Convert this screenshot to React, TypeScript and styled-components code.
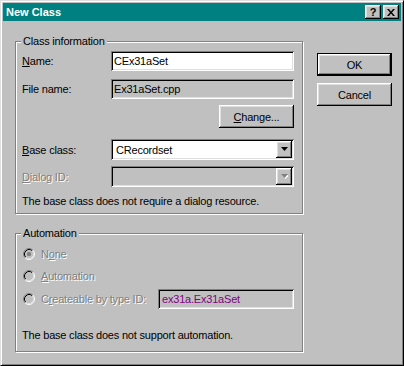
import React from 'react';
import styled, {createGlobalStyle, css} from "styled-components";

const GlobalStyle = createGlobalStyle`
    html, body {
        margin: 0;
        padding: 0;
        background: #c0c0c0;
    }
    body {
        font-family: "Liberation Sans", Arial, sans-serif;
        font-size: 11px;
        letter-spacing: -0.2px;
        color: #000;
    }
`;

const raised = css`
    background: #c0c0c0;
    box-shadow: inset -1px -1px 0 #000, inset 1px 1px 0 #fff, inset -2px -2px 0 #808080, inset 2px 2px 0 #dfdfdf;
`;

const sunken = css`
    box-shadow: inset 1px 1px 0 #808080, inset -1px -1px 0 #fff, inset 2px 2px 0 #000, inset -2px -2px 0 #dfdfdf;
`;

const disabledText = css`
    color: #808080;
    text-shadow: 1px 1px 0 #fff;
`;

const Window = styled.div`
    width: 404px;
    height: 366px;
    box-sizing: border-box;
    border: 1px solid;
    border-color: #dfdfdf #000 #000 #dfdfdf;
    box-shadow: inset 1px 1px 0 #fff, inset -1px -1px 0 #808080;
    padding: 2px;
    background: #c0c0c0;
    display: flex;
    flex-direction: column;
`;

const TitleBar = styled.div`
    height: 18px;
    background: #008080;
    display: flex;
    align-items: center;
    padding: 0 2px 0 3px;
`;

const Title = styled.div`
    flex: 1;
    color: #fff;
    font-weight: 700;
    letter-spacing: 0;
`;

const CaptionButtons = styled.div`
    display: flex;
    gap: 2px;
`;

const CaptionButton = styled.div`
    ${raised};
    width: 16px;
    height: 14px;
    display: flex;
    align-items: center;
    justify-content: center;
    font-weight: 700;
    font-size: 11px;
    line-height: 14px;
`;

const Body = styled.div`
    display: flex;
    gap: 14px;
    padding: 20px 9px 0 12px;
`;

const Main = styled.div`
    width: 288px;
    display: flex;
    flex-direction: column;
    gap: 19px;
`;

const Group = styled.div<{ $bottom: number }>`
    border: 1px solid #808080;
    box-shadow: 1px 1px 0 #fff, inset 1px 1px 0 #fff;
    padding: 0 8px ${p => p.$bottom}px 6px;
    display: flex;
    flex-direction: column;
`;

const Legend = styled.div`
    align-self: flex-start;
    margin: -7px 0 0 -1px;
    padding: 0 2px;
    height: 13px;
    line-height: 13px;
    background: #c0c0c0;
`;

const FieldRow = styled.div<{ $top: number; $h?: number }>`
    display: grid;
    grid-template-columns: 89px 1fr;
    align-items: center;
    margin-top: ${p => p.$top}px;
    height: ${p => p.$h ?? 20}px;
`;

const Label = styled.span<{ $off?: boolean }>`
    ${p => p.$off && disabledText};
`;

const Field = styled.div<{ $white?: boolean; $ink?: string; $pad?: number }>`
    ${sunken};
    height: 100%;
    box-sizing: border-box;
    background: ${p => (p.$white ? '#fff' : '#c0c0c0')};
    color: ${p => p.$ink ?? '#000'};
    padding: 0 2px 0 ${p => p.$pad ?? 3}px;
    display: flex;
    align-items: center;
    justify-content: space-between;
`;

const DropButton = styled.div`
    ${raised};
    width: 16px;
    height: 17px;
    display: flex;
    align-items: center;
    justify-content: center;
`;

const ButtonRow = styled.div<{ $top: number }>`
    display: flex;
    justify-content: flex-end;
    margin-top: ${p => p.$top}px;
`;

const PushButton = styled.div<{ $default?: boolean }>`
    ${raised};
    width: 75px;
    height: 23px;
    box-sizing: border-box;
    display: flex;
    align-items: center;
    justify-content: center;
    ${p => p.$default && css`
        box-shadow: inset 0 0 0 1px #000, inset -2px -2px 0 #000, inset 2px 2px 0 #fff, inset -3px -3px 0 #808080, inset 3px 3px 0 #dfdfdf;
    `};
`;

const Side = styled.div`
    display: flex;
    flex-direction: column;
    gap: 7px;
    padding-top: 12px;
`;

const Note = styled.div<{ $top: number }>`
    margin-top: ${p => p.$top}px;
    height: 13px;
    line-height: 13px;
`;

const RadioRow = styled.div<{ $top: number }>`
    display: flex;
    align-items: center;
    gap: 6px;
    height: 20px;
    margin-top: ${p => p.$top}px;
    padding-left: 1px;
    color: #808080;
`;

const RadioLabel = styled.span`
    ${disabledText};
`;

const TypeField = styled(Field)`
    width: 136px;
    margin-left: auto;
`;

const Radio = ({checked}: { checked?: boolean }) => (
    <svg width="12" height="12" viewBox="0 0 12 12">
        <circle cx="6" cy="6" r="5" fill="#c0c0c0"/>
        <path d="M2.11 9.89 A5.5 5.5 0 0 1 9.89 2.11" fill="none" stroke="#808080"/>
        <path d="M9.89 2.11 A5.5 5.5 0 0 1 2.11 9.89" fill="none" stroke="#fff"/>
        <path d="M2.82 9.18 A4.5 4.5 0 0 1 9.18 2.82" fill="none" stroke="#000"/>
        <path d="M9.18 2.82 A4.5 4.5 0 0 1 2.82 9.18" fill="none" stroke="#dfdfdf"/>
        {checked && <rect x="4" y="4" width="4" height="4" rx="1.5" fill="#808080"/>}
    </svg>
);

const Arrow = ({off}: { off?: boolean }) => (
    <svg width="7" height="5" viewBox="0 0 7 5">
        {off && <path d="M1 1h7L4.5 5z" fill="#fff"/>}
        <path d="M0 0h7L3.5 4z" fill={off ? '#808080' : '#000'}/>
    </svg>
);

export default function App() {
    return (
        <>
            <GlobalStyle/>
            <Window>
                <TitleBar>
                    <Title>New Class</Title>
                    <CaptionButtons>
                        <CaptionButton>?</CaptionButton>
                        <CaptionButton>
                            <svg width="8" height="7" viewBox="0 0 8 7">
                                <path d="M0 0h2l2 2.5L6 0h2L5 3.5 8 7H6L4 4.5 2 7H0l3-3.5z" fill="#000"/>
                            </svg>
                        </CaptionButton>
                    </CaptionButtons>
                </TitleBar>
                <Body>
                    <Main>
                        <Group $bottom={5}>
                            <Legend>Class information</Legend>
                            <FieldRow $top={3}>
                                <Label><u>N</u>ame:</Label>
                                <Field $white>CEx31aSet</Field>
                            </FieldRow>
                            <FieldRow $top={8}>
                                <Label>File name:</Label>
                                <Field>Ex31aSet.cpp</Field>
                            </FieldRow>
                            <ButtonRow $top={6}>
                                <PushButton><span><u>C</u>hange...</span></PushButton>
                            </ButtonRow>
                            <FieldRow $top={11} $h={21}>
                                <Label><u>B</u>ase class:</Label>
                                <Field $white $pad={5}>
                                    CRecordset
                                    <DropButton><Arrow/></DropButton>
                                </Field>
                            </FieldRow>
                            <FieldRow $top={6} $h={21}>
                                <Label $off><u>D</u>ialog ID:</Label>
                                <Field $pad={5}>
                                    <span/>
                                    <DropButton><Arrow off/></DropButton>
                                </Field>
                            </FieldRow>
                            <Note $top={8}>The base class does not require a dialog resource.</Note>
                        </Group>
                        <Group $bottom={9}>
                            <Legend>Automation</Legend>
                            <RadioRow $top={4}>
                                <Radio checked/>
                                <RadioLabel>N<u>o</u>ne</RadioLabel>
                            </RadioRow>
                            <RadioRow $top={2}>
                                <Radio/>
                                <RadioLabel><u>A</u>utomation</RadioLabel>
                            </RadioRow>
                            <RadioRow $top={3}>
                                <Radio/>
                                <RadioLabel>C<u>r</u>eateable by type ID:</RadioLabel>
                                <TypeField $ink="#800080" $pad={4}>ex31a.Ex31aSet</TypeField>
                            </RadioRow>
                            <Note $top={20}>The base class does not support automation.</Note>
                        </Group>
                    </Main>
                    <Side>
                        <PushButton $default>OK</PushButton>
                        <PushButton>Cancel</PushButton>
                    </Side>
                </Body>
            </Window>
        </>
    );
}
